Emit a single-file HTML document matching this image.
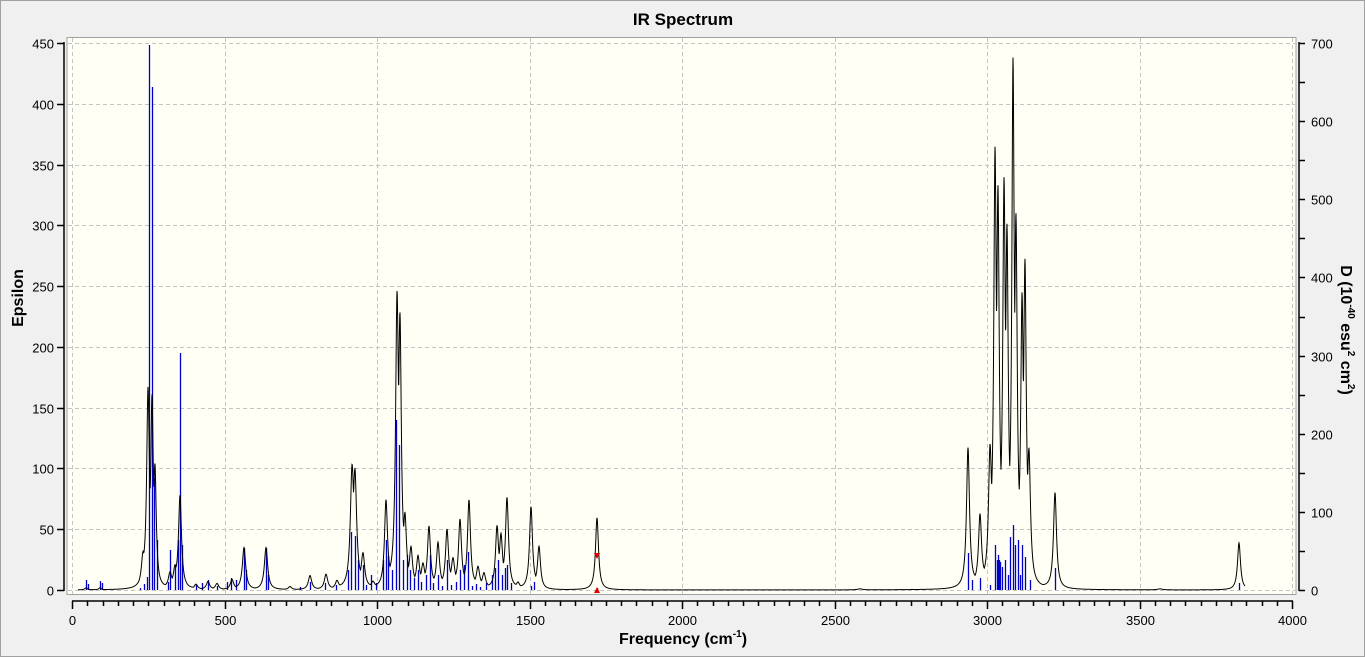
<!DOCTYPE html>
<html><head><meta charset="utf-8"><style>
html,body{margin:0;padding:0;background:#f0f0f0;}
svg{display:block;font-family:"Liberation Sans",Arial,sans-serif;}
</style></head><body>
<svg id="s" width="1365" height="657" viewBox="0 0 1365 657" xmlns="http://www.w3.org/2000/svg">
<rect x="0" y="0" width="1365" height="657" fill="#f0f0f0"/>
<rect x="0.5" y="0.5" width="1364" height="656" fill="none" stroke="#a0a0a0"/>
<rect x="67" y="37.5" width="1229" height="557" fill="#fffff5" stroke="#a0a0a0"/>
<g id="grid" stroke="#c4c4c4" stroke-dasharray="4,3" stroke-width="1"></g>
<g id="axes" stroke="#000" stroke-width="1.5" fill="none"></g>
<g id="lbl" font-size="13" fill="#000"></g>
<g id="sticks" stroke="#0000c8" stroke-width="1.3"></g>
<path id="curve" fill="none" stroke="#000" stroke-width="1"/>
<polygon points="594,553 600,553 597,559" fill="#e00000"/>
<polygon points="594,593 600,593 597,587" fill="#e00000"/>
<text x="683" y="25" font-size="17" font-weight="bold" text-anchor="middle">IR Spectrum</text>
<text x="683" y="644" font-size="16" font-weight="bold" text-anchor="middle">Frequency (cm<tspan font-size="10" dy="-7">-1</tspan><tspan dy="7">)</tspan></text>
<text transform="translate(23,298) rotate(-90)" font-size="16" font-weight="bold" text-anchor="middle">Epsilon</text>
<text transform="translate(1341,330) rotate(90)" font-size="16" font-weight="bold" text-anchor="middle">D (10<tspan font-size="10" dy="-7">-40</tspan><tspan dy="7"> esu</tspan><tspan font-size="10" dy="-7">2</tspan><tspan dy="7"> cm</tspan><tspan font-size="10" dy="-7">2</tspan><tspan dy="7">)</tspan></text>
</svg>
<script>
var NS="http://www.w3.org/2000/svg";
function el(p,t,a,txt){var e=document.createElementNS(NS,t);for(var k in a)e.setAttribute(k,a[k]);if(txt!=null)e.textContent=txt;document.getElementById(p).appendChild(e);}
function fx(f){return 72+f*0.305;}
function ey(v){return 590-v*1.2156;}
function dy(v){return 590-v*0.7814;}
for(var f=0;f<=4000;f+=500){var x=Math.round(fx(f))+0.5;el("grid","line",{x1:x,x2:x,y1:38,y2:594});}
for(var v=0;v<=450;v+=50){var y=Math.round(ey(v))+0.5;el("grid","line",{x1:68,x2:1295,y1:y,y2:y});}
el("axes","line",{x1:64,x2:64,y1:42,y2:591});
for(var v=0;v<=450;v+=50){var y=Math.round(ey(v))+0.5;el("axes","line",{x1:57,x2:64,y1:y,y2:y});el("lbl","text",{x:54,y:y+5,"text-anchor":"end"},String(v));}
el("axes","line",{x1:1299,x2:1299,y1:42,y2:591});
for(var v=0;v<=700;v+=50){var y=Math.round(dy(v))+0.5;el("axes","line",{x1:1299,x2:1305,y1:y,y2:y});if(v%100==0)el("lbl","text",{x:1311,y:y+5},String(v));}
el("axes","line",{x1:72,x2:1293,y1:601,y2:601});
for(var f=0;f<=4000;f+=50){var x=Math.round(fx(f))+0.5;el("axes","line",{x1:x,x2:x,y1:601,y2:f%500==0?609:606});if(f%500==0)el("lbl","text",{x:x,y:625,"text-anchor":"middle"},String(f));}
var st=[[86,580],[88,584],[100,581],[102,583],[140,588],[144,584],[147,577],[149,45],[152,87],[154,478],[157,540],[168,582],[170,550],[175,565],[178,540],[180,353],[182,545],[196,585],[202,583],[208,580],[217,586],[227,582],[231,578],[236,580],[244,548],[246,570],[266,548],[268,575],[300,587],[310,582],[325,583],[336,585],[348,570],[351,532],[355,536],[358,560],[363,565],[366,585],[371,575],[376,583],[383,560],[386,540],[388,556],[392,570],[396,420],[399,445],[403,560],[407,555],[410,570],[414,578],[418,570],[421,582],[426,575],[430,555],[433,583],[438,575],[442,586],[447,560],[451,585],[456,582],[460,570],[464,565],[468,552],[472,586],[476,584],[480,587],[486,583],[492,575],[495,568],[498,560],[502,575],[505,568],[507,565],[511,583],[531,586],[534,582],[597,588],[968,553],[972,580],[980,578],[990,585],[995,545],[997,560],[998,555],[999,560],[1000,562],[1002,567],[1005,560],[1008,575],[1010,537],[1013,525],[1015,545],[1018,540],[1020,575],[1022,545],[1025,557],[1030,580],[1055,568],[1239,583]];
st.forEach(function(s){el("sticks","line",{x1:s[0]+0.5,x2:s[0]+0.5,y1:590,y2:s[1]});});
var pk=[[86,588,1.5],[100,588,1.5],[143,560,2],[148,398,1.6],[152,412,1.5],[155,480,1.5],[170,575,2],[175,570,2],[180,497,1.8],[196,585,2],[208,582,2],[217,584,2],[232,580,2],[244,548,2],[266,548,2],[290,587,2],[310,576,2],[326,575,2],[337,582,2],[352,477,2],[355,482,2],[363,557,2],[373,584,2],[386,504,1.8],[397,313,1.7],[400,340,1.6],[405,527,1.8],[411,553,1.8],[418,560,1.8],[423,568,2],[429,529,1.8],[438,545,1.8],[447,532,1.8],[453,562,2],[460,522,1.8],[469,502,1.8],[478,569,2],[484,575,2],[497,530,1.8],[501,540,1.8],[507,500,1.8],[518,584,2],[531,508,1.8],[539,548,1.8],[597,518,1.8],[860,589,3],[968,450,1.8],[980,520,1.8],[990,465,1.8],[995,185,1.5],[998,230,1.5],[1004,219,1.5],[1007,270,1.5],[1013,98,1.4],[1016,260,1.5],[1022,330,1.5],[1025,292,1.5],[1029,470,1.8],[1055,494,1.8],[1160,589,3],[1239,543,1.8]];
var d="";
for(var x=78;x<=1245;x+=0.25){var sum=0,mx=0;pk.forEach(function(p){var a=590-p[1],w=p[2],t=(x-p[0])/w;var v=a/(1+t*t);sum+=v;if(v>mx)mx=v;});var val=mx+0.35*(sum-mx);var y=590-val;if(y<40)y=40;d+=(d?"L":"M")+x.toFixed(2)+","+y.toFixed(2);}
document.getElementById("curve").setAttribute("d",d);
</script>
</body></html>
